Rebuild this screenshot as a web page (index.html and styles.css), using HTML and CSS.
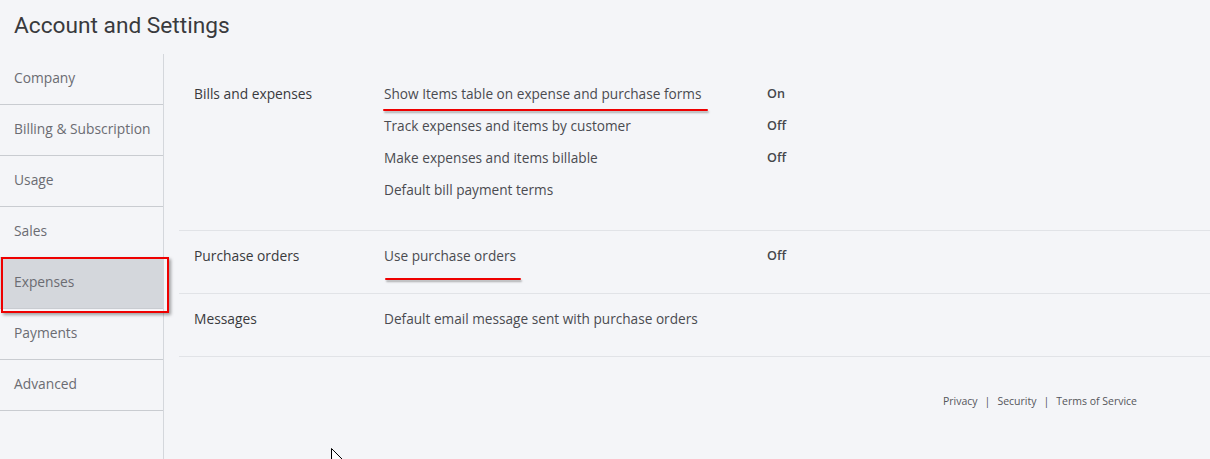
FILE: index.html
```html
<!DOCTYPE html>
<html>
<head>
<meta charset="utf-8">
<link rel="stylesheet" href="styles.css">
</head>
<body>
<header class="page-head"><h1 class="title">Account and Settings</h1></header>
<div class="layout">
  <nav class="sidebar">
    <div class="nav-item">Company</div>
    <div class="nav-item">Billing &amp; Subscription</div>
    <div class="nav-item">Usage</div>
    <div class="nav-item">Sales</div>
    <div class="nav-item nav-item--active">Expenses</div>
    <div class="nav-item">Payments</div>
    <div class="nav-item">Advanced</div>
  </nav>
  <main class="content">
    <section class="section section--first">
      <div class="label">Bills and expenses</div>
      <div class="rows">
        <div class="row"><span class="name mark mark--a">Show Items table on expense and purchase forms</span><span class="value">On</span></div>
        <div class="row"><span class="name">Track expenses and items by customer</span><span class="value">Off</span></div>
        <div class="row"><span class="name">Make expenses and items billable</span><span class="value">Off</span></div>
        <div class="row"><span class="name">Default bill payment terms</span><span class="value"></span></div>
      </div>
    </section>
    <section class="section">
      <div class="label">Purchase orders</div>
      <div class="rows">
        <div class="row"><span class="name mark mark--b">Use purchase orders</span><span class="value">Off</span></div>
      </div>
    </section>
    <section class="section">
      <div class="label">Messages</div>
      <div class="rows">
        <div class="row"><span class="name">Default email message sent with purchase orders</span><span class="value"></span></div>
      </div>
    </section>
    <footer class="footer">
      <span>Privacy</span><span class="sep">|</span><span>Security</span><span class="sep">|</span><span>Terms of Service</span>
    </footer>
  </main>
</div>
<svg class="cursor" width="14" height="12" viewBox="0 0 14 12"><path d="M0.5 0.5 L0.5 12 M0.5 0.5 L11 11" stroke="#000" stroke-width="1" fill="none"/><path d="M1.5 2 L1.5 12 L9.5 12 Z" fill="#fff"/></svg>
</body>
</html>
```
FILE: styles.css
```css
* { box-sizing: border-box; }
html, body { margin: 0; padding: 0; }
body {
  background: #f4f5f8;
  font-family: "Open Sans", "Liberation Sans", sans-serif;
  color: #393a3d;
  width: 1210px;
  height: 459px;
  overflow: hidden;
  position: relative;
}
.page-head {
  height: 54px;
  padding: 12px 0 0 14px;
}
.title {
  margin: 0;
  font-family: Roboto, "Liberation Sans", sans-serif;
  font-weight: 400;
  font-size: 22.7px;
  line-height: 28px;
  color: #393a3d;
}
.layout {
  display: flex;
  height: 405px;
}
.sidebar {
  width: 164px;
  flex: none;
  border-right: 1px solid #d4d7dc;
}
.nav-item {
  position: relative;
  height: 51px;
  border-bottom: 1px solid #c9ccd1;
  padding: 0 0 3px 14px;
  display: flex;
  align-items: center;
  font-size: 13.8px;
  color: #6b6c72;
}
.nav-item--active {
  background: #d4d7dc;
}
.nav-item--active::after {
  content: "";
  position: absolute;
  left: 1px;
  top: -1px;
  width: 164px;
  height: 52px;
  border: 2px solid #ee0000;
  box-shadow: 2px 2px 3px rgba(0,0,0,0.35);
}
.content {
  flex: 1;
  padding: 15px 0 0 15px;
}
.section {
  display: flex;
  padding: 17px 0 29px 15px;
  border-bottom: 1px solid #e1e3e7;
}
.section--first { padding-bottom: 32px; }
.label {
  width: 190px;
  flex: none;
  font-size: 13.8px;
  line-height: 16px;
  color: #393a3d;
}
.rows {
  display: flex;
  flex-direction: column;
  gap: 16px;
}
.row {
  display: flex;
  font-size: 13.65px;
  line-height: 16px;
}
.name {
  width: 383px;
  flex: none;
  color: #4a4b50;
}
.value {
  font-size: 12.6px;
  font-weight: 600;
  color: #45464b;
}
.mark { position: relative; }
.mark::after {
  content: "";
  position: absolute;
  height: 2px;
  background: #ee0000;
  box-shadow: 1px 2px 2px rgba(0,0,0,0.3);
  border-radius: 1px;
}
.mark--a::after { left: -1px; top: 23px; width: 325px; }
.mark--b::after { left: 1px; top: 30px; width: 136px; }
.footer {
  display: flex;
  justify-content: flex-end;
  padding: 37px 73px 0 0;
  font-size: 10.5px;
  color: #55565b;
}
.sep { margin: 0 7px; }
.cursor {
  position: absolute;
  left: 331px;
  top: 448px;
}
```
